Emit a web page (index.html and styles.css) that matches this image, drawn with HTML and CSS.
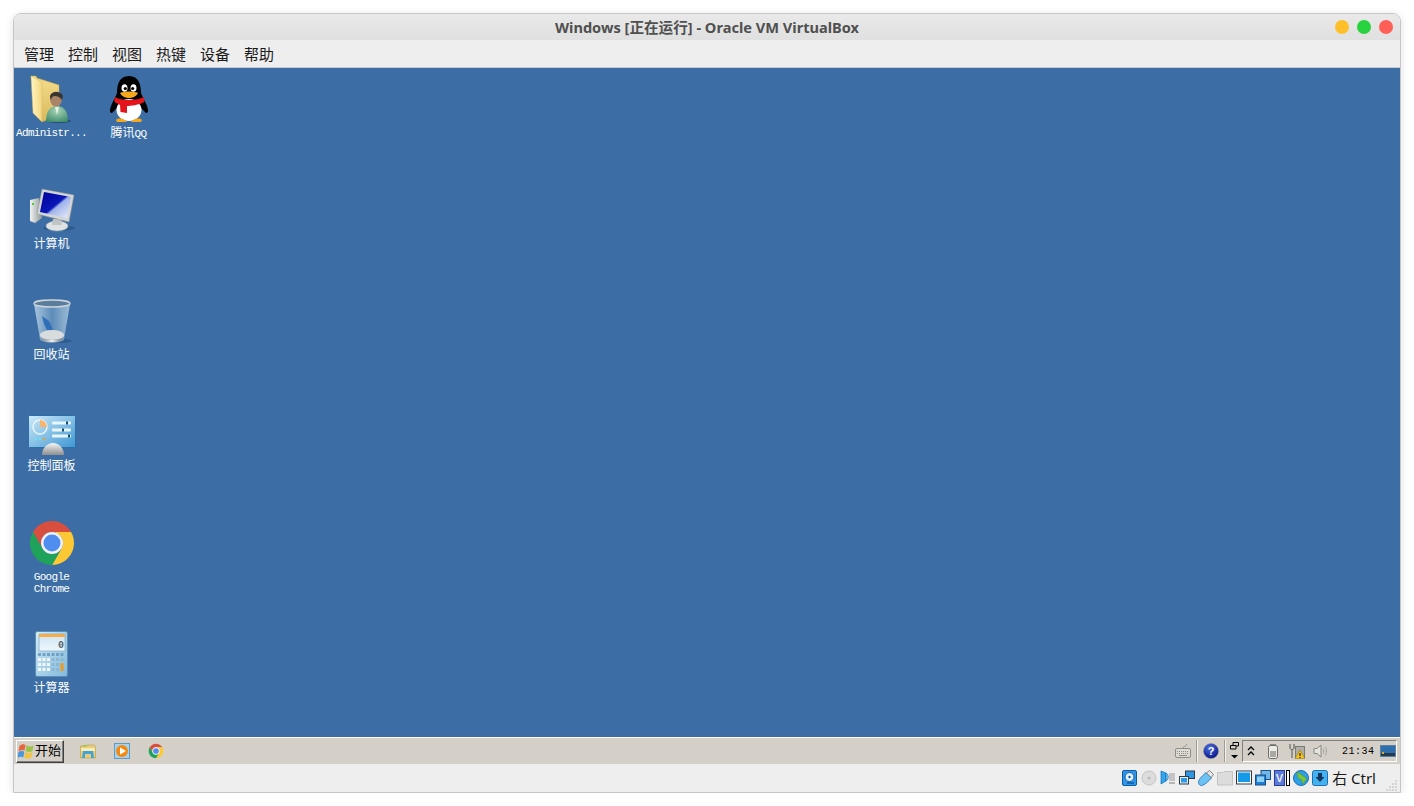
FILE: index.html
```html
<!DOCTYPE html>
<html>
<head>
    <title>Windows [正在运行] - Oracle VM VirtualBox</title>
    <link rel="stylesheet" href="styles.css">
</head>
<body>
    <svg class="svg-defs" xmlns="http://www.w3.org/2000/svg">
        <defs>
            <symbol id="chrome" viewBox="0 0 48 48">
                <path fill="#d84f40" d="M4.95 13A22 22 0 0 1 43.05 13H24A11 11 0 0 0 14.47 29.5Z"/>
                <path fill="#fcc934" d="M4.95 13A22 22 0 0 1 43.05 13H24A11 11 0 0 0 14.47 29.5Z" transform="rotate(120 24 24)"/>
                <path fill="#1fa25a" d="M4.95 13A22 22 0 0 1 43.05 13H24A11 11 0 0 0 14.47 29.5Z" transform="rotate(240 24 24)"/>
                <circle cx="24" cy="24" r="11" fill="#f1f1f1"/>
                <circle cx="24" cy="24" r="8.5" fill="#4f8ef0"/>
            </symbol>
        </defs>
    </svg>

    <div class="window">
        <div class="titlebar">
            <span></span>
            <span class="title">Windows [正在运行] - Oracle VM VirtualBox</span>
            <div class="lights">
                <span class="light yellow"></span>
                <span class="light green"></span>
                <span class="light red"></span>
            </div>
        </div>

        <div class="menubar">
            <span>管理</span>
            <span>控制</span>
            <span>视图</span>
            <span>热键</span>
            <span>设备</span>
            <span>帮助</span>
        </div>

        <div class="screen">
            <div class="desktop">
                <div class="desk-icon">
                    <svg class="big-icon" viewBox="0 0 48 48">
                        <defs>
                            <linearGradient id="folder-back" x1="0" y1="0" x2="0" y2="1"><stop offset="0" stop-color="#f6dd8c"/><stop offset="1" stop-color="#d9b95c"/></linearGradient>
                            <linearGradient id="folder-front" x1="0" y1="0" x2="1" y2="0"><stop offset="0" stop-color="#fff6c4"/><stop offset="1" stop-color="#f2d67e"/></linearGradient>
                            <radialGradient id="user-body" cx="0.5" cy="0.3" r="0.8"><stop offset="0" stop-color="#a6d4b6"/><stop offset="1" stop-color="#3a8768"/></radialGradient>
                        </defs>
                        <ellipse cx="31" cy="46" rx="12" ry="2" fill="#2a4c72"/>
                        <path fill="url(#folder-back)" stroke="#b89a4c" stroke-width=".5" d="M3 1 8 1 9 3 31 10 31 40 14 47Z"/>
                        <path fill="url(#folder-front)" stroke="#d4b768" stroke-width=".5" d="M3 1 14 7 14 47 5 38Z"/>
                        <path fill="url(#user-body)" d="M18 47C18 36 22 31 29 31S40 36 40 47Z"/>
                        <path fill="#e7f1e8" d="M27 32 31 32 29 40Z"/>
                        <ellipse cx="28" cy="24" rx="6" ry="7.500" fill="#a98467"/>
                        <path fill="#3a3530" d="M22 22C22 16 33 15 35 21L34 25C31 21 27 20 24 22L23 25Z"/>
                    </svg>
                    <div class="label label-latin">Administr...</div>
                </div>

                <div class="desk-icon">
                    <svg class="big-icon" viewBox="0 0 48 48">
                        <path fill="#000" d="M24 1C14 1 12 10 12 18 10 24 5 30 5 36 5 38 7 39 9 36L12 33C14 43 34 43 36 33L39 36C41 39 43 38 43 36 43 30 38 24 36 18 36 10 34 1 24 1Z"/>
                        <ellipse cx="24" cy="35" rx="12.5" ry="11" fill="#fff"/>
                        <ellipse cx="19.5" cy="13" rx="3" ry="3.8" fill="#fff"/>
                        <ellipse cx="28.5" cy="13" rx="3" ry="3.8" fill="#fff"/>
                        <circle cx="20.3" cy="13.5" r="1.6" fill="#000"/>
                        <circle cx="27.7" cy="13.5" r="1.6" fill="#000"/>
                        <path fill="#f5a81c" d="M15 18C19 16 29 16 33 18 31 22 27 23 24 23S17 22 15 18Z"/>
                        <path fill="#e4151a" d="M9.5 22C16 26 32 26 39 22L39.5 27C34 30 25 31 22 31L22 38 15.5 37 15 30 9.5 27Z"/>
                        <path fill="#f5a81c" d="M11 45C14 42 20 44 22 47H12ZM37 45C34 42 28 44 26 47H36Z"/>
                    </svg>
                    <div class="label">腾讯<span class="latin-part">QQ</span></div>
                </div>

                <div class="desk-icon">
                    <svg class="big-icon" viewBox="0 0 48 48">
                        <defs>
                            <linearGradient id="pc-screen" x1="0" y1="0" x2="1" y2="1"><stop offset="0" stop-color="#00009a"/><stop offset=".5" stop-color="#0a18b8"/><stop offset=".56" stop-color="#9fb2ea"/><stop offset="1" stop-color="#eef2fb"/></linearGradient>
                            <linearGradient id="pc-tower" x1="0" y1="0" x2="1" y2="0"><stop offset="0" stop-color="#f2f4f3"/><stop offset="1" stop-color="#8d9696"/></linearGradient>
                        </defs>
                        <ellipse cx="31" cy="42" rx="16" ry="3" fill="#2e5c8e"/>
                        <path fill="url(#pc-tower)" d="M2 14 11 12 14 32 7 37 2 35Z"/>
                        <rect x="4" y="17" width="2" height="2" fill="#49d13d"/>
                        <ellipse cx="29" cy="40" rx="11" ry="5" fill="#dfe3e3" stroke="#a7adad" stroke-width=".5"/>
                        <path fill="#bfc5c5" d="M25 33H33L34 39H24Z"/>
                        <path fill="#d2d6d6" stroke="#8a8f90" stroke-width=".5" d="M14 3 46 9 41 36 9 28Z"/>
                        <path fill="url(#pc-screen)" d="M16 6 43 11 39 32 12 26Z"/>
                    </svg>
                    <div class="label">计算机</div>
                </div>

                <div class="desk-icon">
                    <svg class="big-icon" viewBox="0 0 48 48">
                        <defs>
                            <linearGradient id="bin-body" x1="0" y1="0" x2="1" y2="0"><stop offset="0" stop-color="#a8c5de"/><stop offset=".5" stop-color="#5d8cb9"/><stop offset="1" stop-color="#9dbcd7"/></linearGradient>
                            <linearGradient id="bin-base" x1="0" y1="0" x2="1" y2="0"><stop offset="0" stop-color="#777"/><stop offset=".5" stop-color="#eee"/><stop offset="1" stop-color="#666"/></linearGradient>
                        </defs>
                        <ellipse cx="31" cy="44" rx="13" ry="2" fill="#2e5c8e"/>
                        <path fill="url(#bin-body)" d="M6 7 12 42C14 47 34 47 36 42L42 7Z"/>
                        <path fill="#2f6fb8" d="M14 19 21 24 25 33 20 35 16 27Z"/>
                        <ellipse cx="24" cy="38" rx="12" ry="5" fill="#d8dcdd"/>
                        <path fill="url(#bin-base)" d="M12 40C14 47 34 47 36 40 34 44 14 44 12 40Z"/>
                        <ellipse cx="24" cy="6.500" rx="18" ry="3.500" fill="#5b7d9c" stroke="#cfd6db" stroke-width="1.300"/>
                    </svg>
                    <div class="label">回收站</div>
                </div>

                <div class="desk-icon">
                    <svg class="big-icon" viewBox="0 0 48 48">
                        <defs>
                            <linearGradient id="cp-panel" x1="0" y1="0" x2="1" y2="1"><stop offset="0" stop-color="#cfeaf8"/><stop offset="1" stop-color="#3d97d3"/></linearGradient>
                            <linearGradient id="cp-dome" x1="0" y1="0" x2="0" y2="1"><stop offset="0" stop-color="#f5f5f5"/><stop offset="1" stop-color="#8e8e8e"/></linearGradient>
                        </defs>
                        <rect x=".5" y="7.5" width="47" height="32" rx="1" fill="url(#cp-panel)" stroke="#2c6fa8"/>
                        <circle cx="12" cy="19" r="7" fill="none" stroke="#eaf6fc" stroke-width="1.4"/>
                        <path fill="#f7b46a" d="M12 12A7 7 0 0 1 19 19H12Z"/>
                        <g fill="#e7f6fd">
                            <rect x="24" y="13.5" width="19" height="3" rx="1"/>
                            <rect x="24" y="20.5" width="19" height="3" rx="1"/>
                            <rect x="24" y="26.5" width="19" height="3" rx="1"/>
                        </g>
                        <g fill="#12496f">
                            <rect x="38" y="13.5" width="2" height="3"/>
                            <rect x="34" y="20.5" width="2" height="3"/>
                            <rect x="40" y="26.5" width="2" height="3"/>
                        </g>
                        <circle cx="8" cy="31" r="1.2" fill="#66e3f2"/>
                        <circle cx="12" cy="31" r="1.2" fill="#66e3f2"/>
                        <circle cx="16" cy="31" r="1.2" fill="#f39b2f"/>
                        <path fill="url(#cp-dome)" d="M14 47C14 40 19 35 25 35S36 40 36 47Z"/>
                    </svg>
                    <div class="label">控制面板</div>
                </div>

                <div class="desk-icon">
                    <svg class="big-icon"><use href="#chrome"/></svg>
                    <div class="label label-latin">Google<br>Chrome</div>
                </div>

                <div class="desk-icon">
                    <svg class="big-icon" viewBox="0 0 48 48">
                        <defs>
                            <linearGradient id="calc-body" x1="0" y1="0" x2="1" y2="1"><stop offset="0" stop-color="#d5edf8"/><stop offset="1" stop-color="#7fb9dc"/></linearGradient>
                            <linearGradient id="calc-screen" x1="0" y1="0" x2="0" y2="1"><stop offset="0" stop-color="#cde4f3"/><stop offset="1" stop-color="#eef7fc"/></linearGradient>
                        </defs>
                        <rect x="7.5" y="1.5" width="32" height="45" rx="2" fill="url(#calc-body)" stroke="#5a8fb3"/>
                        <rect x="11" y="4" width="26" height="17" fill="url(#calc-screen)" stroke="#6e9dbd" stroke-width=".6"/>
                        <rect x="11" y="4" width="26" height="3" fill="#f4ad4a"/>
                        <text class="calc-digit" x="33" y="18">0</text>
                        <g fill="#6fa2c4">
                            <rect x="10" y="23" width="3" height="3"/><rect x="14.5" y="23" width="3" height="3"/><rect x="19" y="23" width="3" height="3"/><rect x="23.5" y="23" width="3" height="3"/><rect x="28" y="23" width="3" height="3"/><rect x="32.5" y="23" width="3" height="3"/>
                        </g>
                        <g fill="#f3f6f8">
                            <rect x="10" y="28" width="3" height="3"/><rect x="14.5" y="28" width="3" height="3"/><rect x="19" y="28" width="3" height="3"/>
                            <rect x="10" y="33" width="3" height="3"/><rect x="14.5" y="33" width="3" height="3"/><rect x="19" y="33" width="3" height="3"/>
                            <rect x="10" y="38" width="3" height="3"/><rect x="14.5" y="38" width="3" height="3"/><rect x="19" y="38" width="3" height="3"/>
                        </g>
                        <g fill="#8eb6d0">
                            <rect x="23.5" y="28" width="3" height="3"/><rect x="28" y="28" width="3" height="3"/><rect x="32.5" y="28" width="3" height="3"/>
                            <rect x="23.5" y="33" width="3" height="3"/><rect x="28" y="33" width="3" height="3"/>
                            <rect x="23.5" y="38" width="3" height="3"/><rect x="28" y="38" width="3" height="3"/>
                        </g>
                        <rect x="32.5" y="33" width="3" height="8" fill="#f09a22"/>
                    </svg>
                    <div class="label">计算器</div>
                </div>
            </div>

            <div class="taskbar">
                <div class="start-button">
                    <svg class="icon16" viewBox="0 0 16 16">
                        <path fill="#e8663c" d="M1.500 3C3.500 1 5.500 1 7.500 2L6.500 7.500C4.500 6.500 2.500 6.800 .5 8.500Z"/>
                        <path fill="#9cc24a" d="M8.500 2.300C11 4 13 4 15.500 2.500L14.500 8C12.500 9.500 10 9.300 7.500 8Z"/>
                        <path fill="#4a97da" d="M.3 9.500C2.500 7.800 4.500 7.800 6.300 8.700L5.300 14.500C3.500 13.500 1.500 13.500 -.5 15Z"/>
                        <path fill="#f3c43c" d="M7.300 9.200C10 10.500 12.300 10.500 14.300 9L13.300 14.500C11.500 16 9 15.800 6.300 14.800Z"/>
                    </svg>
                    <span class="start-text">开始</span>
                </div>
                <div class="quick-launch">
                    <svg class="icon16" viewBox="0 0 16 16">
                        <path fill="#e9cd79" stroke="#b99c4c" stroke-width=".6" d="M.5 3H6L7 2H14L15.500 4V15H.5Z"/>
                        <rect x="3" y="2" width="4" height="1.400" fill="#8ccb54"/>
                        <path fill="#f8ecb5" d="M1 5H15V8H1Z"/>
                        <path fill="#3fa3d8" d="M3 8H13L14 15H11V11H5V15H2Z"/>
                    </svg>
                    <svg class="icon16" viewBox="0 0 16 16">
                        <rect x=".5" y=".5" width="15" height="15" fill="#a8d1ec" stroke="#5b9ac9"/>
                        <circle cx="8" cy="8" r="6" fill="#f28a12"/>
                        <path fill="#fff" d="M6 4.500 12 8 6 11.500Z"/>
                    </svg>
                    <svg class="icon16"><use href="#chrome"/></svg>
                </div>
                <div class="tray-area">
                    <svg class="icon16" viewBox="0 0 16 16">
                        <path fill="none" stroke="#9c9a94" d="M8 5C8 3 11 4 12 1"/>
                        <rect x=".5" y="5.500" width="15" height="9" rx="1.500" fill="#dedbd5" stroke="#8f8d88"/>
                        <path stroke="#8f8d88" stroke-dasharray="1 1" d="M2 8.500H14M2 10.500H14"/>
                        <path stroke="#8f8d88" d="M4 12.500H12"/>
                    </svg>
                    <span class="bar-sep"></span>
                    <svg class="icon16" viewBox="0 0 16 16">
                        <defs><radialGradient id="help-ball" cx=".4" cy=".3" r=".8"><stop offset="0" stop-color="#4e6fe0"/><stop offset="1" stop-color="#000c80"/></radialGradient></defs>
                        <circle cx="8" cy="8" r="7.500" fill="url(#help-ball)" stroke="#8d8d8d" stroke-width=".5"/>
                        <text class="help-mark" x="8" y="12">?</text>
                    </svg>
                    <span class="bar-sep"></span>
                    <svg class="restore-icon" viewBox="0 0 9 18">
                        <path fill="none" stroke="#000" d="M3 3.500V.5H8.500V4H6M.5 3.500H6V7H.5Z"/>
                        <path fill="#000" d="M1 13H8L4.500 16.500Z"/>
                    </svg>
                    <div class="tray">
                        <svg class="chevrons" viewBox="0 0 8 10">
                            <path fill="none" stroke="#000" stroke-width="1.300" d="M1 4 4 1 7 4M1 9 4 6 7 9"/>
                        </svg>
                        <svg class="icon16" viewBox="0 0 16 16">
                            <rect x="5" y="1" width="6" height="2" fill="#8b8984"/>
                            <rect x="3.500" y="2.500" width="9" height="13" rx="2" fill="#ecebe8" stroke="#6b6a66"/>
                            <rect x="5" y="8" width="6" height="6" fill="#a9a7a2"/>
                        </svg>
                        <svg class="icon16" viewBox="0 0 16 16">
                            <path fill="none" stroke="#55534f" d="M1 1V5C1 7 5 7 5 5V1M3 7V15"/>
                            <rect x="6.500" y="3.500" width="9" height="11" fill="#b0aea8" stroke="#7c7a75"/>
                            <path fill="#f6c51d" stroke="#8a6a00" stroke-width=".5" d="M11 7 16 15.500H6Z"/>
                            <path stroke="#000" d="M11 10V13M11 14V15"/>
                        </svg>
                        <svg class="icon16" viewBox="0 0 16 16">
                            <path fill="#e6e4df" stroke="#8a8883" d="M1 5.500H4L8 2V14L4 10.500H1Z"/>
                            <path fill="none" stroke="#a5a39e" d="M10 5.500C11 7 11 9 10 10.500M12 3.500C14 6 14 10 12 12.500"/>
                        </svg>
                        <span class="clock">21:34</span>
                        <svg class="icon16" viewBox="0 0 16 16">
                            <rect x=".5" y="2.500" width="15" height="11" fill="#2f6fae" stroke="#5e7f9f"/>
                            <rect x="1" y="10" width="14" height="3" fill="#263a4e"/>
                            <rect x="2" y="9" width="2" height="2" fill="#e2a72d"/>
                        </svg>
                    </div>
                </div>
            </div>
        </div>

        <div class="statusbar">
            <svg class="icon16" viewBox="0 0 16 16">
                <rect x=".5" y=".5" width="14" height="15" rx="1.500" fill="#2f96e6" stroke="#0d5aa8"/>
                <circle cx="7.500" cy="7" r="4.500" fill="#dff1fc" stroke="#0d5aa8"/>
                <circle cx="7.500" cy="7" r="1.200" fill="#0d5aa8"/>
                <path stroke="#0d5aa8" stroke-width="1.500" d="M5 13H12"/>
            </svg>
            <svg class="icon16" viewBox="0 0 16 16">
                <circle cx="8" cy="8" r="7" fill="#dcdcdc" stroke="#c4c4c4"/>
                <circle cx="8" cy="8" r="1.500" fill="#b9b9b9"/>
            </svg>
            <svg class="icon16" viewBox="0 0 16 16">
                <path fill="#35a6ee" stroke="#0f6fb8" stroke-width=".7" d="M1 1 6 3V11L1 14Z"/>
                <path fill="#7fcdf5" stroke="#0f6fb8" stroke-width=".7" d="M6 3C9 5 9 9 6 11Z"/>
                <path stroke="#9a9a9a" d="M9 4H15M9 6H15M9 8H15M9 10H15"/>
                <rect x="9" y="12" width="6" height="2" fill="#b5b5b5"/>
            </svg>
            <svg class="icon16" viewBox="0 0 16 16">
                <rect x="6.500" y="1" width="9" height="7.500" fill="#2f96e6" stroke="#303a44"/>
                <rect x=".5" y="6.500" width="9" height="7.500" fill="#dff1fc" stroke="#303a44"/>
                <rect x="2" y="8" width="6" height="4.500" fill="#2f96e6"/>
            </svg>
            <svg class="icon16" viewBox="0 0 16 16">
                <path fill="#6cc2f4" stroke="#1a6fb6" stroke-width=".8" d="M.5 12C.5 10 3 7 8 2.500L13.500 8C8 14 5 15.500 3.500 15.500 1.500 15.500 .5 14 .5 12Z"/>
                <path fill="#e9e9e9" stroke="#666" stroke-width=".8" d="M8.500 3 11.500 .5 15.500 4.500 13 7.500Z"/>
            </svg>
            <svg class="icon16" viewBox="0 0 16 16">
                <path fill="#dcdcdc" stroke="#c4c4c4" d="M.5 2.500H6L7 1.500H15.500V15H.5Z"/>
            </svg>
            <svg class="icon16" viewBox="0 0 16 16">
                <rect x=".5" y="1" width="15" height="13" fill="#fff" stroke="#2a3a4c"/>
                <rect x="2" y="2.500" width="12" height="9.500" fill="#169ae8"/>
            </svg>
            <svg class="icon16" viewBox="0 0 16 16">
                <rect x="6" y=".5" width="9.500" height="9" fill="#6fb6ea" stroke="#1f4f86"/>
                <rect x=".5" y="5" width="10" height="10" fill="#1a7fd4" stroke="#1f4f86"/>
                <rect x="2" y="6.500" width="7" height="5.500" fill="#8fd0f5"/>
            </svg>
            <div class="vt-group">
                <svg class="vt-icon" viewBox="0 0 11 16">
                    <rect x=".5" y=".5" width="10" height="15" fill="#5b79d8" stroke="#2a3d97"/>
                    <text class="vt-mark" x="5.500" y="12">V</text>
                </svg>
                <span class="vt-bar"></span>
            </div>
            <svg class="icon16" viewBox="0 0 16 16">
                <circle cx="8" cy="8" r="7.500" fill="#2e9fe6" stroke="#1a6fb6"/>
                <path fill="#7cc63a" stroke="#4d8f1f" stroke-width=".5" d="M4 2 9 5 14 9 9 14 9 10 5 8Z"/>
            </svg>
            <svg class="icon16" viewBox="0 0 16 16">
                <rect x=".5" y=".5" width="15" height="15" rx="2" fill="#45b2f0" stroke="#1a6fb6"/>
                <path fill="#12345e" d="M6 3H10V7H12.500L8 12 3.500 7H6Z"/>
            </svg>
            <span class="hostkey">右 Ctrl</span>
            <svg class="grip" viewBox="0 0 12 12">
                <g fill="#c8c8c8">
                    <circle cx="10" cy="2" r=".9"/>
                    <circle cx="7" cy="5" r=".9"/><circle cx="10" cy="5" r=".9"/>
                    <circle cx="4" cy="8" r=".9"/><circle cx="7" cy="8" r=".9"/><circle cx="10" cy="8" r=".9"/>
                    <circle cx="1" cy="11" r=".9"/><circle cx="4" cy="11" r=".9"/><circle cx="7" cy="11" r=".9"/><circle cx="10" cy="11" r=".9"/>
                </g>
            </svg>
        </div>
    </div>
</body>
</html>
```

FILE: styles.css
```css
body {
    margin: 0;
    background-color: #fff;
    overflow: hidden;
}

.svg-defs {
    display: block;
    width: 0;
    height: 0;
}

.window {
    display: flex;
    flex-direction: column;
    width: 1388px;
    height: 780px;
    margin: 13px 0 0 13px;
    box-sizing: border-box;
    border: 1px solid #c6c6c6;
    border-radius: 8px 8px 0 0;
    overflow: hidden;
    box-shadow: 0 2px 10px rgba(0, 0, 0, 0.12);
    font-family: "Noto Sans", "Noto Sans CJK SC", sans-serif;
}

.titlebar {
    display: grid;
    grid-template-columns: 1fr auto 1fr;
    align-items: center;
    height: 26px;
    flex: none;
    background: linear-gradient(#e9e9e9, #e0e0e0);
}

.title {
    padding-bottom: 2px;
    font-size: 14.6px;
    font-weight: 700;
    color: #505050;
}

.lights {
    display: flex;
    justify-content: flex-end;
    gap: 8px;
    padding-right: 7px;
}

.light {
    width: 14px;
    height: 14px;
    border-radius: 50%;
}

.yellow { background-color: #fdc02a; }
.green { background-color: #29d33f; }
.red { background-color: #ff5f57; }

.menubar {
    display: flex;
    align-items: center;
    gap: 14px;
    flex: none;
    height: 27px;
    padding-left: 10px;
    background-color: #eee;
    border-bottom: 1px solid #c4c8cc;
    font-size: 15px;
    color: #1a1a1a;
}

.screen {
    display: flex;
    flex-direction: column;
    flex: none;
    height: 696px;
}

.desktop {
    display: grid;
    grid-auto-flow: column;
    grid-template-rows: repeat(6, 111px);
    grid-auto-columns: 75px;
    column-gap: 2px;
    align-content: start;
    flex: none;
    height: 669px;
    background-color: #3c6ea5;
    overflow: hidden;
}

.desk-icon {
    display: flex;
    flex-direction: column;
    align-items: center;
    padding-top: 7px;
    box-sizing: border-box;
}

.desk-icon:nth-child(1) { grid-area: 1 / 1; }
.desk-icon:nth-child(2) { grid-area: 1 / 2; }

.big-icon {
    display: block;
    width: 48px;
    height: 48px;
    flex: none;
}

.label {
    margin-top: 3px;
    font-family: "Noto Sans CJK SC", sans-serif;
    font-size: 12px;
    line-height: 12px;
    color: #fff;
    text-align: center;
    white-space: nowrap;
}

.label-latin,
.latin-part {
    font-family: "Liberation Mono", monospace;
    font-size: 11px;
    letter-spacing: -0.7px;
}

.label-latin {
    margin-top: 4px;
}

.calc-digit {
    font-family: "Liberation Mono", monospace;
    font-size: 10px;
    font-weight: 700;
    fill: #54636e;
    text-anchor: middle;
}

.taskbar {
    display: flex;
    align-items: center;
    flex: none;
    height: 26px;
    border-top: 1px solid #fff;
    padding: 0 3px 0 2px;
    background-color: #d4d0c8;
}

.start-button {
    display: flex;
    align-items: center;
    gap: 1px;
    box-sizing: border-box;
    width: 48px;
    height: 23px;
    padding-left: 1px;
    background-color: #d4d0c8;
    border: 1px solid;
    border-color: #fff #404040 #404040 #fff;
    box-shadow: inset -1px -1px 0 #808080;
    font-family: "Noto Sans CJK SC", sans-serif;
    font-size: 13px;
    color: #000;
}

.start-text {
    padding-bottom: 3px;
}

.icon16 {
    display: block;
    width: 16px;
    height: 16px;
    flex: none;
}

.quick-launch {
    display: flex;
    gap: 18px;
    margin-left: 16px;
}

.tray-area {
    display: flex;
    align-items: center;
    margin-left: auto;
}

.bar-sep {
    width: 2px;
    height: 22px;
    margin: 0 5px;
    background-color: #f4f2ee;
    border-left: 1px solid #9c9a94;
    box-sizing: border-box;
}

.bar-sep:nth-of-type(2) {
    margin-right: 4px;
}

.restore-icon {
    display: block;
    flex: none;
    width: 9px;
    height: 18px;
    margin-right: 3px;
}

.tray {
    display: flex;
    align-items: center;
    flex: none;
    box-sizing: border-box;
    width: 155px;
    height: 22px;
    padding-left: 4px;
    border: 1px solid;
    border-color: #808080 #fff #fff #808080;
}

.chevrons {
    display: block;
    flex: none;
    width: 8px;
    height: 10px;
    margin-right: 10px;
}

.tray .icon16:nth-child(3),
.tray .icon16:nth-child(4) {
    margin-left: 8px;
}

.clock {
    flex: none;
    width: 32px;
    margin: 0 6px 0 13px;
    font-family: "Liberation Mono", monospace;
    font-size: 10px;
    letter-spacing: 0.5px;
    color: #000;
    white-space: nowrap;
}

.help-mark {
    font-family: "Liberation Sans", sans-serif;
    font-size: 11px;
    font-weight: 700;
    fill: #fff;
    text-anchor: middle;
}

.statusbar {
    display: flex;
    align-items: center;
    justify-content: flex-end;
    gap: 3px;
    flex: 1;
    position: relative;
    padding-right: 24px;
    background-color: #eee;
}

.vt-group {
    display: flex;
    align-items: center;
    gap: 1px;
}

.vt-icon {
    display: block;
    width: 11px;
    height: 16px;
}

.vt-bar {
    width: 4px;
    height: 16px;
    box-sizing: border-box;
    border: 1px solid #000;
    background-color: #fff;
}

.vt-mark {
    font-family: "Liberation Sans", sans-serif;
    font-size: 11px;
    font-weight: 700;
    fill: #e8ecfa;
    text-anchor: middle;
}

.hostkey {
    margin-left: 1px;
    font-size: 15px;
    line-height: 18px;
    color: #1a1a1a;
    white-space: nowrap;
}

.grip {
    position: absolute;
    right: 2px;
    bottom: 1px;
    width: 12px;
    height: 12px;
}
```
